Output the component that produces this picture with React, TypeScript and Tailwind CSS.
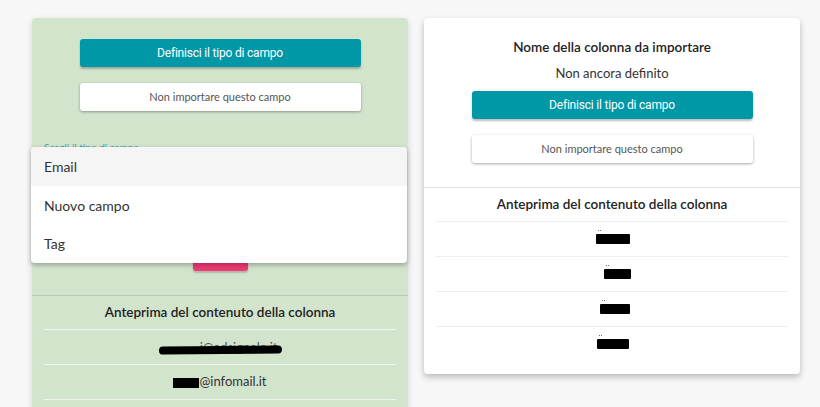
import React from 'react';

const tealBtn =
  "h-7 w-[281px] mx-auto flex items-center justify-center rounded-[3px] bg-[#0097a7] text-white text-[12px] tracking-[-0.2px] shadow-[0_2px_2px_rgba(0,0,0,0.25)] [font-family:'Liberation_Sans_Narrow','Roboto',sans-serif]";
const whiteBtn =
  "h-7 w-[281px] mx-auto flex items-center justify-center rounded-[3px] bg-white text-[#555] text-[11px] shadow-[0_1px_3px_rgba(0,0,0,0.35)] [font-family:'Lato',sans-serif]";

const Redacted: React.FC<{ w: number; dx?: number }> = ({ w, dx = 0 }) => (
  <div className="relative h-[10px]" style={{ width: w, marginLeft: dx }}>
    <div className="absolute left-[2px] -top-[4px] h-[2px] w-[3px] border-t border-dotted border-gray-500" />
    <div className="absolute inset-x-0 top-0 h-[10px] bg-black rounded-[1px]" />
  </div>
);

const App: React.FC = () => {
  return (
    <div className="h-screen overflow-hidden bg-[#f7f7f7] [font-family:'Lato',sans-serif]">
      <div className="flex items-start gap-4 pl-8 pt-[18px]">
        {/* left card (menu open) */}
        <div className="relative w-[376px] bg-[#d3e4cd] rounded-[4px] shadow-[0_2px_6px_rgba(0,0,0,0.15)]">
          <div className="pt-[21px] pb-6 flex flex-col">
            <button className={tealBtn}>Definisci il tipo di campo</button>
            <button className={`${whiteBtn} mt-4`}>Non importare questo campo</button>
            <p className="mt-[30px] pl-3 text-[10px] leading-[12px] text-[#3aa3ad]">Scegli il tipo di campo</p>
            <div className="h-[90px]" />
            <button className="mx-auto h-7 w-[55px] rounded-[3px] bg-[#ef3a74] shadow-[0_2px_2px_rgba(0,0,0,0.2)]" />
          </div>
          <div className="border-t border-[#b9c8b4]">
            <div className="h-[33px] flex items-center justify-center text-[13.5px] font-semibold text-[#222]">
              Anteprima del contenuto della colonna
            </div>
            <div className="mx-3">
              <div className="h-[35px] border-t border-white/60 flex items-center justify-center">
                <div className="relative w-[123px] text-right text-[13px] text-[#555] leading-[16px]">
                  <span className="pr-[4px]">i@adsignale.it</span>
                  <div className="absolute left-0 right-0 top-[7px] h-[8px] bg-black rounded-sm -rotate-[0.6deg]" />
                </div>
              </div>
              <div className="h-[35px] border-t border-white/60 flex items-center justify-center">
                <div className="flex items-center text-[13px] text-[#333]">
                  <div className="h-[10px] w-[26px] bg-black mt-[2px]" />
                  <span>@infomail.it</span>
                </div>
              </div>
              <div className="h-[35px] border-t border-white/60" />
            </div>
          </div>

          {/* open dropdown menu */}
          <div className="absolute left-[-1px] top-[129px] w-[376px] bg-white rounded-[4px] shadow-[0_2px_5px_rgba(0,0,0,0.3)] overflow-hidden text-[14px] text-[#333]">
            <div className="h-[39px] flex items-center pl-[13px] bg-[#f5f5f5]">Email</div>
            <div className="h-[38px] flex items-center pl-[13px]">Nuovo campo</div>
            <div className="h-[39px] flex items-center pl-[13px]">Tag</div>
          </div>
        </div>

        {/* right card */}
        <div className="w-[376px] bg-white rounded-[4px] shadow-[0_3px_6px_rgba(0,0,0,0.25)]">
          <div className="pt-5 pb-6 flex flex-col">
            <p className="text-center text-[13.5px] leading-[18px] font-semibold text-[#222]">
              Nome della colonna da importare
            </p>
            <p className="mt-2 text-center text-[13px] leading-[18px] text-[#333]">Non ancora definito</p>
            <button className={`${tealBtn} mt-[9px]`}>Definisci il tipo di campo</button>
            <button className={`${whiteBtn} mt-4`}>Non importare questo campo</button>
          </div>
          <div className="border-t border-[#e3e3e3] pb-[13px]">
            <div className="h-[33px] flex items-center justify-center text-[13.5px] font-semibold text-[#222]">
              Anteprima del contenuto della colonna
            </div>
            <div className="mx-3">
              <div className="h-[35px] border-t border-[#eeeeee] flex items-center justify-center">
                <Redacted w={34} dx={2} />
              </div>
              <div className="h-[35px] border-t border-[#eeeeee] flex items-center justify-center">
                <Redacted w={27} dx={10} />
              </div>
              <div className="h-[35px] border-t border-[#eeeeee] flex items-center justify-center">
                <Redacted w={30} dx={6} />
              </div>
              <div className="h-[35px] border-t border-[#eeeeee] flex items-center justify-center">
                <Redacted w={32} dx={2} />
              </div>
            </div>
          </div>
        </div>
      </div>
    </div>
  );
};

export default App;
